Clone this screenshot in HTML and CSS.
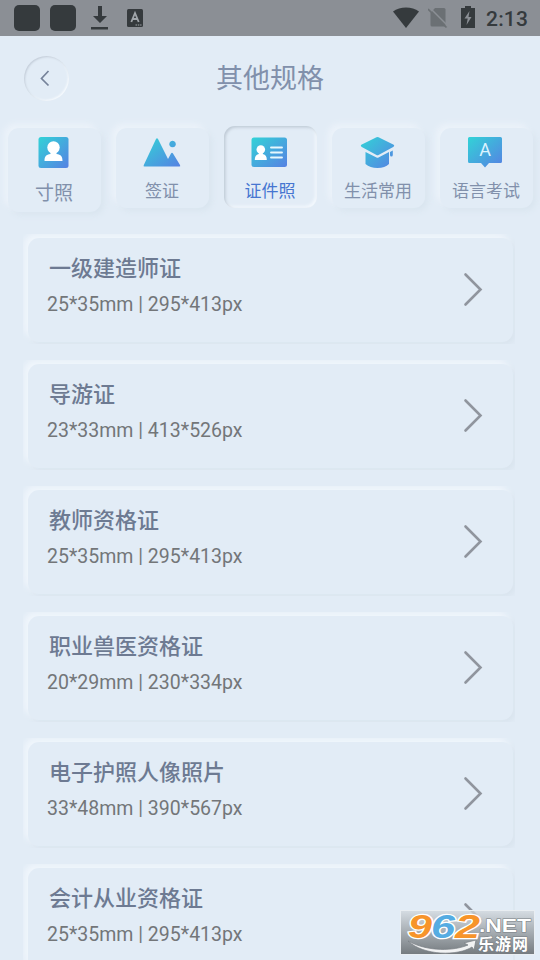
FILE: index.html
```
<!DOCTYPE html>
<html lang="zh-CN">
<head>
<meta charset="utf-8">
<title>其他规格</title>
<link rel="stylesheet" href="styles.css">
</head>
<body>
<svg class="defs" width="0" height="0" aria-hidden="true">
  <defs>
    <linearGradient id="g" x1="0" y1="0" x2="1" y2="1"><stop offset="0" stop-color="#32d3d7"/><stop offset="1" stop-color="#5681e3"/></linearGradient>
    <symbol id="chev" viewBox="0 0 20 36"><path d="M2.500 2.500L17.500 17.500L2.500 32.500" fill="none" stroke="#90959e" stroke-width="2.600" stroke-linecap="round"/></symbol>
  </defs>
</svg>
<div class="screen">
  <header class="status">
    <div class="status-left">
      <i class="app"></i><i class="app"></i>
      <svg class="download" width="18" height="24" viewBox="0 0 18 24"><path d="M7 0h4v10h5l-7 7-7-7h5zM0 21h17v2.500H0z" fill="#353a3d"/></svg>
      <svg class="keyboard" width="16" height="18" viewBox="0 0 16 18"><rect width="16" height="18" rx="1.500" fill="#353a3d"/><path d="M4.300 13L8 4l3.700 9M5.500 10h5" fill="none" stroke="#a0a5aa" stroke-width="1.800"/><path d="M8.500 16h6" stroke="#a0a5aa" stroke-width="1.200" stroke-dasharray="1.500 .8"/></svg>
    </div>
    <div class="status-right">
      <svg class="wifi" width="26" height="22" viewBox="0 0 26 22"><path d="M0 4.500C7-1 19-1 26 4.500L13 21z" fill="#353a3d"/></svg>
      <svg class="sim" width="20" height="22" viewBox="0 0 20 22"><path d="M7 1h9q1.500 0 1.500 1.500v17H4q-1.500 0-1.500-1.500V6z" fill="#6b7074"/><path d="M1.500 .5L20 19" stroke="#8b8f95" stroke-width="1.500"/><path d="M0 2L18.500 20.500" stroke="#6b7074" stroke-width="1.700"/></svg>
      <svg class="battery" width="14" height="22" viewBox="0 0 14 22"><path d="M4 0h6v2h4v20H0V2h4z" fill="#353a3d"/><path d="M8.500 5L3.500 12.500h3.200L5.500 19l5-8H7.500z" fill="#8b8f95"/></svg>
      <span class="clock">2:13</span>
    </div>
  </header>
  <div class="titlebar">
    <button class="back" aria-label="返回"><svg width="10" height="17" viewBox="0 0 10 17"><path d="M8.500 1L1.500 8.500l7 7" fill="none" stroke="#76839a" stroke-width="1.700"/></svg></button>
    <h1>其他规格</h1>
  </div>
  <nav class="tabs">
    <a class="tab large">
      <svg width="40" height="34" viewBox="0 0 40 34"><rect x="4.500" y="2" width="30" height="31" rx="2.500" fill="url(#g)"/><circle cx="19.500" cy="12.500" r="6.200" fill="#fff"/><path d="M16.500 16h6v3c4.500.5 6 2.500 6 7H10.500c0-4.500 1.500-6.500 6-7z" fill="#fff"/></svg>
      <span>寸照</span>
    </a>
    <a class="tab">
      <svg width="40" height="34" viewBox="0 0 40 34"><path d="M3.500 31.500q-1.500 0-.7-1.500L15 4q1-1.500 2 0l10 20 3-5.500q1-1.500 2 0L39 30q.8 1.500-.7 1.500zM31.500 5.700a3.300 3.300 0 1 0 .1 0z" fill="url(#g)"/></svg>
      <span>签证</span>
    </a>
    <a class="tab active">
      <svg width="40" height="34" viewBox="0 0 40 34"><rect x="2.500" y="2.500" width="35.500" height="29.500" rx="2.500" fill="url(#g)"/><circle cx="11.800" cy="14.500" r="4.300" fill="#fff"/><path d="M9.800 17h4v2c3 .5 4 2.500 4 6h-12c0-3.500 1-5.500 4-6z" fill="#fff"/><path d="M22 12.500h11M22 17.500h11M22 22.500h11" stroke="#e7f7fd" stroke-width="1.900" stroke-linecap="round"/></svg>
      <span>证件照</span>
    </a>
    <a class="tab">
      <svg width="40" height="34" viewBox="0 0 40 34"><path d="M19.500 2.200q1-.4 2 0l14.700 7.300q2 1.200 0 2.400l-14.700 8q-1 .5-2 0l-14.700-8q-2-1.200 0-2.400zM8.500 17l11 5.500q1 .5 2 0L32 17v12q-4 4-11.500 4T8.500 29zM33 17l2.800-1.500V20q0 1.500-1.400 1.500T33 20z" fill="url(#g)"/></svg>
      <span>生活常用</span>
    </a>
    <a class="tab">
      <svg width="40" height="34" viewBox="0 0 40 34"><path d="M4.500 2h31q1.500 0 1.500 1.500v23q0 1.500-1.500 1.500H24l-4 4.500-4-4.500H4.500Q3 28 3 26.500v-23Q3 2 4.500 2z" fill="url(#g)"/><text class="letter" x="20" y="20.500" text-anchor="middle">A</text></svg>
      <span>语言考试</span>
    </a>
  </nav>
  <main class="list">
    <article class="item"><div class="card"><div><h2>一级建造师证</h2><p>25*35mm | 295*413px</p></div><svg width="20" height="36"><use href="#chev"/></svg></div></article>
    <article class="item"><div class="card"><div><h2>导游证</h2><p>23*33mm | 413*526px</p></div><svg width="20" height="36"><use href="#chev"/></svg></div></article>
    <article class="item"><div class="card"><div><h2>教师资格证</h2><p>25*35mm | 295*413px</p></div><svg width="20" height="36"><use href="#chev"/></svg></div></article>
    <article class="item"><div class="card"><div><h2>职业兽医资格证</h2><p>20*29mm | 230*334px</p></div><svg width="20" height="36"><use href="#chev"/></svg></div></article>
    <article class="item"><div class="card"><div><h2>电子护照人像照片</h2><p>33*48mm | 390*567px</p></div><svg width="20" height="36"><use href="#chev"/></svg></div></article>
    <article class="item"><div class="card"><div><h2>会计从业资格证</h2><p>25*35mm | 295*413px</p></div><svg width="20" height="36"><use href="#chev"/></svg></div></article>
  </main>
  <div class="watermark">
    <svg width="135" height="45" viewBox="0 0 135 45">
      <path d="M8 31C24 46 58 46 72 37l2 3 2-10-12 3 4 2C54 41 28 42 8 31z" fill="#f1f2f3" stroke="#777d82" stroke-width=".7"/>
      <g class="digits"><text x="8" y="28" textLength="24" lengthAdjust="spacingAndGlyphs" fill="#f7942a">9</text><text x="31" y="28" textLength="24" lengthAdjust="spacingAndGlyphs" fill="#55ace2">6</text><text x="55" y="28" textLength="25" lengthAdjust="spacingAndGlyphs" fill="#f7942a">2</text></g>
      <text class="net" x="79" y="22" textLength="52" lengthAdjust="spacingAndGlyphs">.NET</text>
      <text class="site" x="78" y="40" textLength="50">乐游网</text>
    </svg>
  </div>
</div>
</body>
</html>
```
FILE: styles.css
```
* { box-sizing: border-box; }
body { margin: 0; background: #e2ecf6; font-family: Roboto, "Noto Sans CJK SC", sans-serif; }
svg { display: block; flex: none; }
.defs { position: absolute; }
.screen { position: relative; width: 540px; height: 960px; overflow: hidden; background: #e2ecf6; }

.status { display: flex; justify-content: space-between; height: 36px; background: #8b8f95; }
.status-left, .status-right { display: flex; align-items: center; }
.status-left { padding-left: 14px; }
.app { width: 26px; height: 26px; margin-right: 10px; border-radius: 5px; background: #353a3d; }
.download { margin-left: 5px; }
.keyboard { margin-left: 18px; }
.status-right { padding-right: 12px; }
.sim { margin-left: 9px; }
.battery { margin-left: 13px; margin-bottom: 3px; }
.clock { width: 42px; margin-left: 11px; font-size: 21px; line-height: 36px; font-weight: 500; color: #353a3d; letter-spacing: .2px; padding-top: 2px; }

.titlebar { display: grid; grid-template-columns: 46px 1fr 46px; align-items: center; height: 84px; padding: 0 24px; }
.back { display: grid; place-items: center; width: 45px; height: 45px; padding: 0 4px 0 0; border: 0; border-radius: 50%; background: #e2ecf6; box-shadow: inset 1px 1px 2px #c3cdd9, inset -1px -1px 2px #f8fbfe; }
h1 { margin: 0; padding-top: 2px; font-size: 27px; line-height: 40px; font-weight: 400; color: #8190ab; text-align: center; }

.tabs { display: grid; grid-template-columns: repeat(5, 108px); align-items: start; height: 114px; padding-top: 8px; }
.tab { display: flex; flex-direction: column; align-items: center; height: 80px; margin: 0 7px 0 8px; padding: 7px 1px 0 0; border-radius: 11px; background: #e2ecf6; box-shadow: -4px -4px 6px #ecf3fa, 3px 3px 6px #d9e5ef; color: #8190ab; font-size: 17px; line-height: 24px; }
.tab > svg { margin-left: -2px; }
.tab.large > svg { margin-left: -1px; }
.tab span { margin-top: 10px; white-space: nowrap; }
.tab.large { height: 84px; font-size: 19px; }
.tab.large span { margin-top: 13px; }
.tab.active { height: 82px; margin-top: -2px; padding-top: 9px; box-shadow: inset 1.500px 1.500px 3px #bfcad5, inset -2px -2px 3px #f3f8fd; color: #4676d1; }
.letter { font: 18px Roboto, sans-serif; fill: #dcf4ff; }

.list { display: grid; gap: 16px; padding: 0 25px 0 23px; }
.item { height: 110px; padding: 4px 2px 2px 5px; overflow: hidden; }
.card { display: flex; justify-content: space-between; align-items: flex-start; height: 104px; padding: 15px 30px 0 19px; border-radius: 11px; background: #e2ecf6; box-shadow: -4px -4px 6px #f0f6fc, 3px 3px 6px #d9e4ee; }
.card > svg { margin-top: 19px; }
h2 { margin: 0 0 0 2px; font-size: 22px; line-height: 32px; font-weight: 500; color: #6d7a92; }
p { margin: 6px 0 0; font-size: 19.500px; line-height: 28px; color: #737679; }

.watermark { position: absolute; left: 400px; top: 910px; width: 135px; height: 45px; border: 1px solid #e9eef2; background: linear-gradient(rgba(208, 214, 219, .75), rgba(112, 118, 122, .95)); }
.watermark svg { margin: -1px; }
.digits { font: italic bold 33px "Liberation Sans", sans-serif; stroke: #fff; stroke-width: 2.500px; paint-order: stroke; }
.net { font: bold 19px "Liberation Sans", sans-serif; fill: #fff; stroke: #777d82; stroke-width: 1px; paint-order: stroke; }
.site { font: bold 16px/1 "Noto Sans CJK SC", sans-serif; fill: #fff; stroke: #777d82; stroke-width: 1px; paint-order: stroke; }
```
